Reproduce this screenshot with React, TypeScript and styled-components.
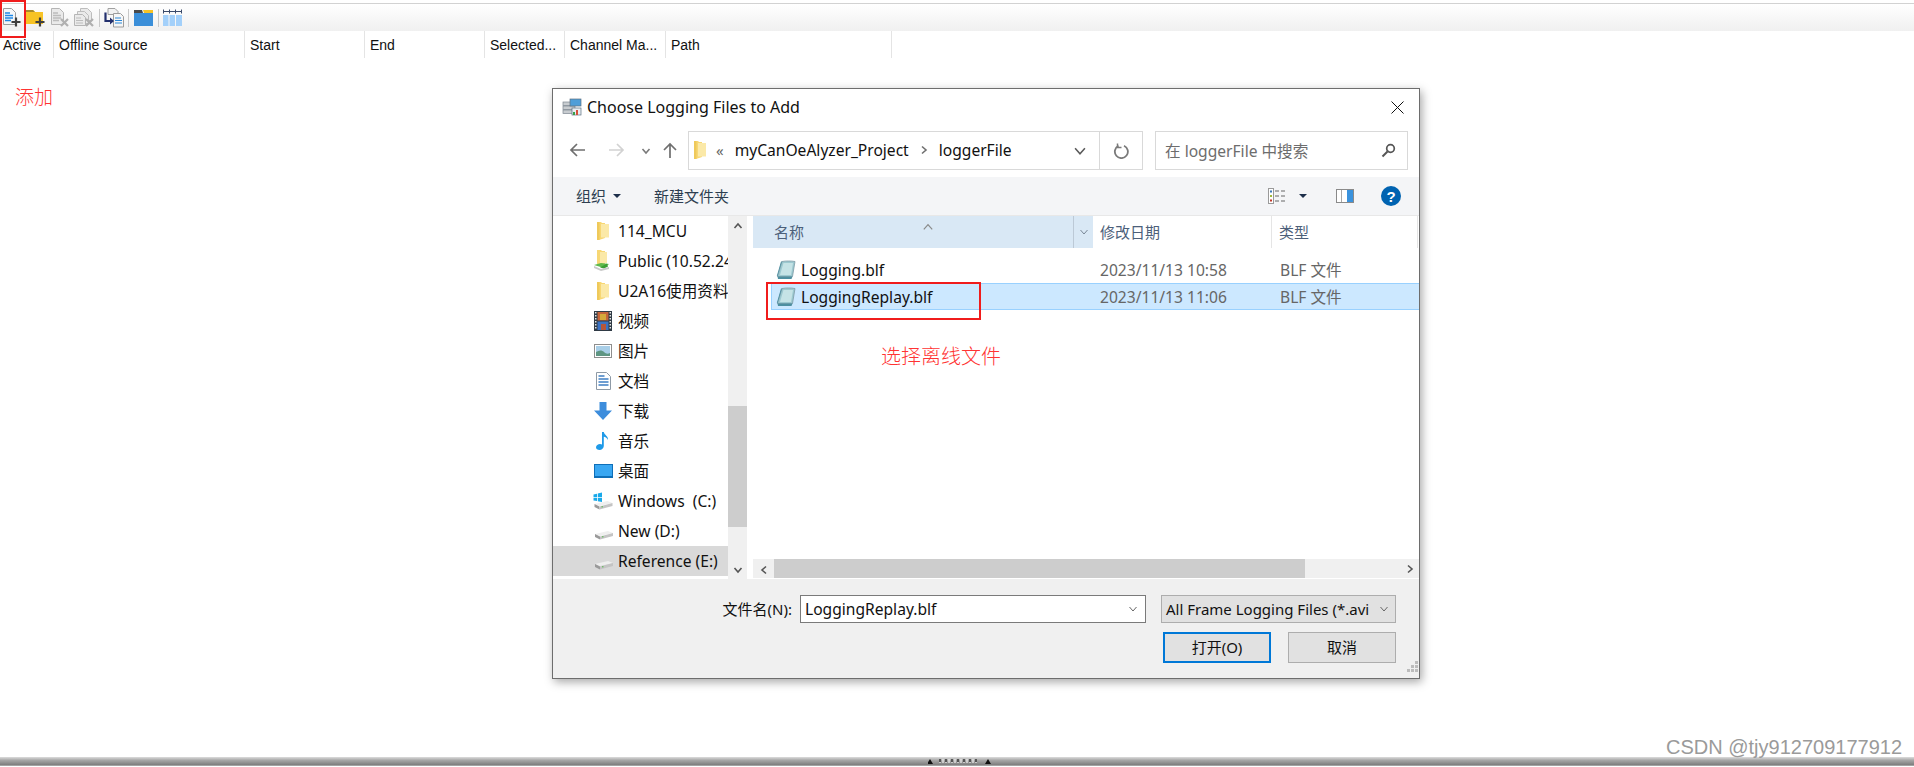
import React from 'react';
import styled, { createGlobalStyle } from 'styled-components';

const UI_FONT = `"Noto Sans", "Noto Sans CJK SC", sans-serif`;

const GlobalStyle = createGlobalStyle`
  html, body {
    margin: 0;
    padding: 0;
    background: #fff;
    overflow: hidden;
  }
  * {
    box-sizing: border-box;
  }
`;

const Page = styled.div`
  position: relative;
  display: flex;
  flex-direction: column;
  width: 1914px;
  height: 767px;
  overflow: hidden;
  background: #fff;
  font-family: ${UI_FONT};
`;

const TopToolbar = styled.div`
  display: flex;
  align-items: center;
  height: 28px;
  margin-top: 3px;
  flex-shrink: 0;
  border-top: 1px solid #d2d2d2;
  background: linear-gradient(#ffffff, #f0f0f0);
`;

const ToolButton = styled.div`
  display: flex;
  align-items: center;
  justify-content: center;
  width: 24px;
  height: 20px;
  flex-shrink: 0;
`;

const ToolSeparator = styled.div`
  width: 1px;
  height: 18px;
  margin: 0 2px 0 2.5px;
  background: #c8c8c8;
  flex-shrink: 0;
`;

const ColumnRow = styled.div`
  display: flex;
  height: 27px;
  flex-shrink: 0;
  background: #fff;
`;

const ColumnHead = styled.div<{ $width: number }>`
  width: ${p => p.$width}px;
  padding: 1px 0 0 ${p => (p.$width === 54 ? 3 : 5)}px;
  border-right: 1px solid #e4e4e4;
  font-family: "Liberation Sans", sans-serif;
  font-size: 14px;
  line-height: 26px;
  color: #111;
  white-space: nowrap;
  overflow: hidden;
`;

const Workspace = styled.div`
  flex: 1;
`;

const BottomBar = styled.div`
  display: flex;
  align-items: center;
  height: 9px;
  margin-bottom: 1px;
  padding-left: 928px;
  flex-shrink: 0;
  background: linear-gradient(#dcdcdc, #a8a8a8 35%, #808080 85%, #b8b8b8);
`;

const AddNote = styled.div`
  position: absolute;
  left: 15px;
  top: 82px;
  font-family: "Noto Sans CJK SC", sans-serif;
  font-size: 19px;
  font-weight: 300;
  line-height: 28px;
  color: #f33;
`;

const FileNote = styled.div`
  position: absolute;
  left: 881px;
  top: 342px;
  font-family: "Noto Sans CJK SC", sans-serif;
  font-size: 20px;
  font-weight: 300;
  line-height: 28px;
  color: #f33;
`;

const ToolMark = styled.div`
  position: absolute;
  left: 0;
  top: 0;
  width: 26px;
  height: 38px;
  border: 2px solid #f01c1c;
`;

const RowMark = styled.div`
  position: absolute;
  left: 766px;
  top: 282px;
  width: 215px;
  height: 38px;
  border: 2px solid #f01c1c;
`;

const Watermark = styled.div`
  position: absolute;
  left: 1666px;
  top: 735px;
  font-family: "Liberation Sans", sans-serif;
  font-size: 20px;
  line-height: 24px;
  color: #9a9a9a;
  white-space: nowrap;
`;

const Dialog = styled.div`
  position: absolute;
  left: 552px;
  top: 88px;
  display: flex;
  flex-direction: column;
  width: 868px;
  height: 591px;
  border: 1px solid #6d6d6d;
  background: #fff;
  box-shadow: 2px 3px 9px rgba(0, 0, 0, 0.35);
  font-size: 15.6px;
  color: #111;
`;

const TitleBar = styled.div`
  display: flex;
  align-items: center;
  height: 37px;
  padding: 0 15px 1px 9px;
  flex-shrink: 0;
`;

const TitleText = styled.div`
  flex: 1;
  margin-left: 5px;
  font-size: 16px;
`;

const NavRow = styled.div`
  display: flex;
  align-items: flex-start;
  height: 51px;
  padding: 5px 12px 0 16px;
  flex-shrink: 0;
`;

const NavButton = styled.div<{ $width: number }>`
  display: flex;
  align-items: center;
  justify-content: center;
  width: ${p => p.$width}px;
  height: 39px;
  flex-shrink: 0;
`;

const AddressBox = styled.div`
  display: flex;
  align-items: center;
  width: 455px;
  height: 39px;
  margin-left: 9px;
  border: 1px solid #d9d9d9;
  flex-shrink: 0;
`;

const Crumbs = styled.div`
  display: flex;
  align-items: center;
  flex: 1;
  padding: 0 0 1px 5px;
  gap: 10px;
  white-space: nowrap;
`;

const CrumbMark = styled.span`
  color: #666;
  font-size: 15px;
  margin-right: 1px;
`;

const AddressTail = styled.div`
  display: flex;
  align-items: center;
  justify-content: center;
  width: 39px;
  height: 100%;
`;

const RefreshCell = styled.div`
  display: flex;
  align-items: center;
  justify-content: center;
  width: 43px;
  height: 100%;
  border-left: 1px solid #d9d9d9;
`;

const SearchBox = styled.div`
  display: flex;
  align-items: center;
  justify-content: space-between;
  width: 253px;
  height: 39px;
  margin-left: 12px;
  padding: 0 11px 1px 9px;
  border: 1px solid #d9d9d9;
  color: #6d6d6d;
  flex-shrink: 0;
`;

const ActionBar = styled.div`
  display: flex;
  align-items: center;
  height: 39px;
  padding: 0 18px 0 23px;
  background: #f4f5f7;
  border-bottom: 1px solid #e8e8e8;
  flex-shrink: 0;
`;

const ActionLabel = styled.div`
  padding-bottom: 2px;
  color: #2d3e50;
  font-size: 15px;
`;

const DownCaret = styled.div<{ $gap: number }>`
  width: 0;
  height: 0;
  margin-left: ${p => p.$gap}px;
  border-left: 4px solid transparent;
  border-right: 4px solid transparent;
  border-top: 4px solid #1d2f4a;
`;

const ActionSpacer = styled.div<{ $width?: number }>`
  flex: ${p => (p.$width ? 'none' : 1)};
  width: ${p => p.$width || 0}px;
`;

const HelpBadge = styled.div`
  display: flex;
  align-items: center;
  justify-content: center;
  width: 20px;
  height: 20px;
  border-radius: 50%;
  background: #0063b1;
  color: #fff;
  font-family: "Liberation Sans", sans-serif;
  font-size: 15px;
  font-weight: 700;
`;

const Body = styled.div`
  display: flex;
  height: 363px;
  flex-shrink: 0;
`;

const Sidebar = styled.div`
  width: 175px;
  flex-shrink: 0;
`;

const SideRow = styled.div<{ $active?: boolean }>`
  display: flex;
  align-items: center;
  height: 30px;
  padding-left: 40px;
  gap: 5px;
  background: ${p => (p.$active ? '#d9d9d9' : 'transparent')};
  white-space: pre;
  overflow: hidden;
`;

const SideIcon = styled.div`
  display: flex;
  align-items: center;
  justify-content: center;
  width: 20px;
  height: 20px;
  flex-shrink: 0;
`;

const SideLabel = styled.span`
  padding-bottom: 1px;
`;

const VScroll = styled.div`
  display: flex;
  flex-direction: column;
  width: 19px;
  background: #f0f0f0;
  flex-shrink: 0;
`;

const ScrollButton = styled.div<{ $size: number }>`
  display: flex;
  align-items: center;
  justify-content: center;
  width: ${p => p.$size}px;
  height: ${p => p.$size}px;
  flex-shrink: 0;
`;

const VSpace = styled.div<{ $height: number }>`
  height: ${p => p.$height}px;
`;

const VThumb = styled.div`
  height: 121px;
  background: #cdcdcd;
`;

const Listing = styled.div`
  display: flex;
  flex-direction: column;
  flex: 1;
  min-width: 0;
  margin-left: 6px;
`;

const ListHead = styled.div`
  display: flex;
  height: 32px;
  flex-shrink: 0;
  color: #4c607a;
  font-size: 15px;
`;

const NameHead = styled.div`
  position: relative;
  display: flex;
  align-items: center;
  width: 320px;
  padding: 0 0 2px 21px;
  background: #d9e8f5;
`;

const SortMark = styled.div`
  position: absolute;
  left: 169px;
  top: 1px;
`;

const NameDrop = styled.div`
  display: flex;
  align-items: center;
  justify-content: center;
  width: 20px;
  background: #d9e8f5;
  border-left: 1px solid #bcc9d6;
`;

const PlainHead = styled.div<{ $width: number }>`
  display: flex;
  align-items: center;
  width: ${p => p.$width}px;
  padding: 0 0 2px 7px;
  border-right: 1px solid #e5e5e5;
`;

const Rows = styled.div`
  flex: 1;
  padding: 8px 0 0 18px;
`;

const FileRow = styled.div<{ $selected?: boolean }>`
  display: flex;
  align-items: center;
  height: 27px;
  padding-left: 4px;
  border: 1px solid ${p => (p.$selected ? '#99d1ff' : 'transparent')};
  border-right: none;
  background: ${p => (p.$selected ? '#cce8ff' : 'transparent')};
`;

const FileName = styled.div`
  width: 299px;
  margin-left: 5px;
  white-space: nowrap;
`;

const FileMeta = styled.div<{ $width: number }>`
  width: ${p => p.$width}px;
  color: #666;
  white-space: nowrap;
`;

const HScroll = styled.div`
  display: flex;
  height: 19px;
  margin-bottom: 1px;
  background: #f0f0f0;
  flex-shrink: 0;
`;

const HThumb = styled.div`
  width: 531px;
  background: #cdcdcd;
`;

const Spring = styled.div`
  flex: 1;
`;

const Footer = styled.div`
  flex: 1;
  position: relative;
  padding: 16px 23px 0 0;
  background: #f0f0f0;
`;

const FooterRow = styled.div`
  display: flex;
  align-items: center;
  justify-content: flex-end;
`;

const FileLabel = styled.div`
  margin-right: 8px;
  padding-bottom: 1px;
  font-size: 15px;
`;

const NameInput = styled.div`
  display: flex;
  align-items: center;
  justify-content: space-between;
  width: 346px;
  height: 28px;
  padding: 0 7px 1px 4px;
  border: 1px solid #7a7a7a;
  background: #fff;
`;

const TypeSelect = styled.div`
  display: flex;
  align-items: center;
  justify-content: space-between;
  width: 235px;
  height: 28px;
  margin-left: 15px;
  padding: 0 6px 1px 4px;
  border: 1px solid #adadad;
  background: #e1e1e1;
  white-space: nowrap;
  overflow: hidden;
`;

const TypeText = styled.div`
  font-size: 15px;
`;

const ButtonRow = styled(FooterRow)`
  margin-top: 9px;
  gap: 17px;
`;

const DialogButton = styled.div<{ $primary?: boolean }>`
  display: flex;
  align-items: center;
  justify-content: center;
  width: 108px;
  height: 31px;
  padding-bottom: 2px;
  background: #e1e1e1;
  border: ${p => (p.$primary ? '2px solid #0078d7' : '1px solid #adadad')};
  font-size: 15px;
`;

const Grip = styled.div`
  position: absolute;
  right: 1px;
  bottom: 1px;
`;

const Chevron = ({ dir, size = 10, color = '#606060', weight = 1.6 }: { dir: 'up' | 'down' | 'left' | 'right'; size?: number; color?: string; weight?: number }) => {
  const points = {
    up: '1.5,7 5,3 8.5,7',
    down: '1.5,3 5,7 8.5,3',
    left: '7,1.5 3,5 7,8.5',
    right: '3,1.5 7,5 3,8.5',
  }[dir];
  return (
    <svg width={size} height={size} viewBox="0 0 10 10">
      <polyline points={points} fill="none" stroke={color} strokeWidth={weight} />
    </svg>
  );
};

const ArrowIcon = ({ dir, color }: { dir: 'left' | 'right' | 'up'; color: string }) => {
  const path = {
    left: 'M16 8H2M8 2L2 8l6 6',
    right: 'M1 8h14M9 2l6 6-6 6',
    up: 'M8 16V2M2 8l6-6 6 6',
  }[dir];
  return (
    <svg width="17" height="17" viewBox="0 0 17 17">
      <path d={path} fill="none" stroke={color} strokeWidth="1.7" />
    </svg>
  );
};

const NarrowFolder = () => (
  <svg width="12" height="20" viewBox="0 0 12 20">
    <path d="M0 1h4l1 1h3v15l-6 2H0z" fill="#f7d774" />
    <path d="M4 3h8v13.5H4z" fill="#fbe9a8" />
    <path d="M0 1h2.5v18H0z" fill="#efc95a" />
  </svg>
);

const NetFolder = () => (
  <svg width="20" height="22" viewBox="0 0 20 22">
    <path d="M4 0h4l1 1h3v13H4z" fill="#f7d774" />
    <path d="M7 2h7v11H7z" fill="#fbe9a8" />
    <path d="M1 15l7-2 8 1-5 4z" fill="#5fb94d" />
    <path d="M14 13.5l1 3-4 2-4-1z" fill="#3c9e35" />
    <path d="M1 16l7 3 8-2v2l-8 2-7-3z" fill="#c9c9c9" />
  </svg>
);

const FilmIcon = () => (
  <svg width="18" height="20" viewBox="0 0 18 20">
    <rect width="18" height="20" fill="#2f3a45" />
    <rect x="3.5" y="1" width="11" height="8.5" fill="#c5653a" />
    <rect x="6" y="3" width="6" height="6" fill="#d6a93a" />
    <rect x="3.5" y="10.5" width="11" height="8.5" fill="#3a72c4" />
    <rect x="7" y="13" width="5" height="6" fill="#b7563a" />
    {[1, 4, 7, 10, 13, 16].map(y => (
      <g key={y}>
        <rect x="1" y={y} width="1.5" height="1.5" fill="#e6e6e6" />
        <rect x="15.5" y={y} width="1.5" height="1.5" fill="#e6e6e6" />
      </g>
    ))}
  </svg>
);

const PictureIcon = () => (
  <svg width="18" height="14" viewBox="0 0 18 14">
    <rect x="0.5" y="0.5" width="17" height="13" fill="#fff" stroke="#8e8e8e" />
    <rect x="2" y="2" width="14" height="10" fill="#a9cfe8" />
    <path d="M2 8c3-2 6-2 8 0s4 2 6 1v3H2z" fill="#5f9683" />
  </svg>
);

const DocsIcon = () => (
  <svg width="15" height="18" viewBox="0 0 15 18">
    <path d="M.5.5h10l4 4v13H.5z" fill="#fff" stroke="#8e9aa6" />
    <path d="M2.5 4h6M2.5 7h10M2.5 10h10M2.5 13h10" stroke="#3f7fc4" strokeWidth="1.3" />
  </svg>
);

const DownloadIcon = () => (
  <svg width="18" height="18" viewBox="0 0 18 18">
    <path d="M5.5 0h7v8.5H18L9 18 0 8.5h5.5z" fill="#3d8ddc" />
  </svg>
);

const MusicIcon = () => (
  <svg width="14" height="18" viewBox="0 0 14 18">
    <path d="M6 0h1.8c.4 3 4.800 4 4.200 8-.8-2-2.600-3-4.200-3.200V14c0 2.300-2 4-4.300 4C1.500 18 0 17 0 15.200 0 13.300 2 12 4 12c.8 0 1.500.2 2 .5z" fill="#1f9ae8" />
  </svg>
);

const DesktopIcon = () => (
  <svg width="19" height="14" viewBox="0 0 19 14">
    <rect width="19" height="14" fill="#0f6fb8" />
    <rect x="1" y="1" width="17" height="11" fill="#39a7f2" />
  </svg>
);

const DriveBody = () => (
  <g>
    <path d="M1 13l13-3 5 2-13 3z" fill="#efefef" />
    <path d="M1 13l5 2.500v3L1 16z" fill="#9a9a9a" />
    <path d="M6 15.500l13-3.500v3L6 18.500z" fill="#c4c4c4" />
    <rect x="8" y="15.300" width="1.500" height="1" fill="#53b848" />
  </g>
);

const DriveIcon = () => (
  <svg width="19" height="20" viewBox="0 0 19 20">
    <DriveBody />
  </svg>
);

const SystemDriveIcon = () => (
  <svg width="20" height="20" viewBox="0 0 19 20">
    <path d="M0 3.500l3.500-.8V6H0zM4.300 2.500L8.500 1.500V6H4.300zM0 6.800h3.500v3.300L0 9.500zM4.300 6.800h4.200v4.200l-4.200-.8z" fill="#19a9ea" />
    <DriveBody />
  </svg>
);

const LogFileIcon = () => (
  <svg width="20" height="20" viewBox="0 0 20 20">
    <path d="M6 1.500C10 .8 15 .8 19 1.500L16.500 16.500H1.500z" fill="#9cc9d0" stroke="#7d9aa6" strokeWidth="0.8" />
    <path d="M7.500 3h9.500L15 15H4z" fill="#c5e3e6" />
    <path d="M1.500 16.500h15L15.500 19H2z" fill="#4d8fa0" />
    <path d="M1.500 16.500L6 1.500 5 1.500 .8 16z" fill="#4d8fa0" />
  </svg>
);

const AppIcon = () => (
  <svg width="20" height="18" viewBox="0 0 20 18">
    <rect x="1" y="4" width="12" height="3.500" fill="#c8ccd0" stroke="#7d8790" strokeWidth="0.7" />
    <rect x="1" y="8" width="12" height="3.500" fill="#c8ccd0" stroke="#7d8790" strokeWidth="0.7" />
    <rect x="1" y="12" width="12" height="3.500" fill="#c8ccd0" stroke="#7d8790" strokeWidth="0.7" />
    <rect x="8" y="1" width="11" height="7" fill="#4f9ed8" stroke="#5d6f80" strokeWidth="0.7" />
    <rect x="10" y="10" width="9" height="7" fill="#e8eef2" stroke="#5d6f80" strokeWidth="0.7" />
    <rect x="11" y="14" width="2" height="3" fill="#3aa14a" />
    <rect x="14" y="12" width="2" height="5" fill="#d8503c" />
  </svg>
);

const CloseIcon = () => (
  <svg width="13" height="13" viewBox="0 0 13 13">
    <path d="M.5.5l12 12M12.500.5l-12 12" stroke="#111" strokeWidth="1" />
  </svg>
);

const RefreshIcon = () => (
  <svg width="16" height="16" viewBox="0 0 16 16">
    <path d="M5.500 2.800A6.500 6.500 0 1 0 11 2.700" fill="none" stroke="#7a7a7a" strokeWidth="1.800" />
    <path d="M4.500.5v4h4" fill="none" stroke="#7a7a7a" strokeWidth="1.500" />
  </svg>
);

const SearchIcon = () => (
  <svg width="15" height="15" viewBox="0 0 15 15">
    <circle cx="9.500" cy="5.500" r="3.800" fill="none" stroke="#555" strokeWidth="1.700" />
    <path d="M6.500 8.500L1.500 13.500" stroke="#555" strokeWidth="2" />
  </svg>
);

const ViewsIcon = () => (
  <svg width="18" height="16" viewBox="0 0 18 16">
    <rect x="0.500" y="0.500" width="5" height="15" fill="#fff" stroke="#9a9a9a" />
    <rect x="2" y="2.500" width="2" height="2" fill="#3a78b8" />
    <rect x="2" y="7" width="2" height="2" fill="#9fb83a" />
    <rect x="2" y="11.500" width="2" height="2" fill="#c0392b" />
    <path d="M7 3h4M13 3h4M7 8h4M13 8h4M7 13h4M13 13h4" stroke="#666" />
  </svg>
);

const PaneIcon = () => (
  <svg width="18" height="14" viewBox="0 0 18 14">
    <rect x="0.500" y="0.500" width="17" height="13" fill="#fff" stroke="#8a8a8a" />
    <rect x="5" y="1" width="1" height="12" fill="#a8a8a8" />
    <rect x="11" y="1" width="6" height="12" fill="#3a92dd" />
  </svg>
);

const DocAddIcon = () => (
  <svg width="20" height="20" viewBox="0 0 20 20">
    <path d="M1.500.5h8l4 4v12h-12z" fill="#f4f6f8" stroke="#9c9c9c" />
    <path d="M3 5h5M3 7.500h8M3 10h8M3 12.500h6" stroke="#1e88e5" strokeWidth="1.300" />
    <path d="M14 9.500v9M9.500 14h9" stroke="#3f3f3f" strokeWidth="2.200" />
  </svg>
);

const FolderAddIcon = () => (
  <svg width="20" height="20" viewBox="0 0 20 20">
    <path d="M0 2h7l2 2h8v12H0z" fill="#f7c325" />
    <path d="M0 2h7l2 2H0z" fill="#a88a2a" />
    <path d="M14 9.500v9M9.500 14h9" stroke="#3f3f3f" strokeWidth="2.200" />
  </svg>
);

const DocRemoveIcon = () => (
  <svg width="20" height="20" viewBox="0 0 20 20">
    <path d="M1.500.5h8l4 4v12h-12z" fill="#eaeaea" stroke="#b5b5b5" />
    <path d="M3 5h5M3 7.500h8M3 10h8M3 12.500h6" stroke="#bcbcbc" strokeWidth="1.300" />
    <path d="M11 11l7 7M18 11l-7 7" stroke="#b0b0b0" strokeWidth="2.200" />
  </svg>
);

const StackRemoveIcon = () => (
  <svg width="20" height="20" viewBox="0 0 20 20">
    <path d="M6.500.5h7l4 4v8h-11z" fill="#eaeaea" stroke="#bdbdbd" />
    <path d="M3.500 3.500h7l4 4v8h-11z" fill="#eaeaea" stroke="#bdbdbd" />
    <path d="M.5 6.500h8l3 3v8h-11z" fill="#eaeaea" stroke="#b5b5b5" />
    <path d="M2 10h5M2 12.500h7M2 15h7" stroke="#bcbcbc" strokeWidth="1.200" />
    <path d="M12 11l7 7M19 11l-7 7" stroke="#b0b0b0" strokeWidth="2.200" />
  </svg>
);

const DocMoveIcon = () => (
  <svg width="20" height="20" viewBox="0 0 20 20">
    <path d="M4 .5h7l3 3v3H4z" fill="#f2f2f2" stroke="#a0a0a0" />
    <path d="M9.500 5.500h7l3 3v10.500h-10z" fill="#f6f6f6" stroke="#9c9c9c" />
    <path d="M11 10h6M11 12.500h7M11 15h7" stroke="#2b88d8" strokeWidth="1.200" />
    <path d="M1.500 4.500v8.500H8" fill="none" stroke="#23306e" strokeWidth="2.200" />
    <path d="M6 9.500l4 3.500-4 3.500z" fill="#23306e" />
  </svg>
);

const BlueFolderIcon = () => (
  <svg width="19" height="17" viewBox="0 0 19 17">
    <path d="M0 1h8l1 3H0z" fill="#4a4a4a" />
    <path d="M9 1h10v3H10z" fill="#f7c325" />
    <rect y="4" width="19" height="13" fill="#3b8fd9" />
  </svg>
);

const ColumnsIcon = () => (
  <svg width="19" height="17" viewBox="0 0 19 17">
    <path d="M0 2.500h19" stroke="#3a4a6a" />
    <path d="M.5 .5v4M6.500 .5v4M12.500 .5v4M18.500 .5v4" stroke="#3a4a6a" />
    <rect y="6" width="5.500" height="11" fill="#a3d0fa" />
    <rect x="6.500" y="6" width="5.500" height="11" fill="#a3d0fa" />
    <rect x="13" y="6" width="6" height="11" fill="#a3d0fa" />
  </svg>
);

const SplitterHandle = () => (
  <svg width="64" height="8" viewBox="0 0 64 8">
    <path d="M2 1L-1 6h6zM60 1l-3 5h6z" fill="#111" />
    <path d="M12 1v4M15 1v4M18 1v4M21 1v4M24 1v4M27 1v4M30 1v4M33 1v4M36 1v4M39 1v4M42 1v4M45 1v4M48 1v4" stroke="#fff" strokeWidth="1" />
    <path d="M12 1v3M18 1v3M24 1v3M30 1v3M36 1v3M42 1v3M48 1v3" stroke="#111" strokeWidth="1.300" />
  </svg>
);

const GripIcon = () => (
  <svg width="11" height="11" viewBox="0 0 11 11">
    <path d="M8 0h3v3H8zM4 4h3v3H4zM8 4h3v3H8zM0 8h3v3H0zM4 8h3v3H4zM8 8h3v3H8z" fill="#bcbcbc" />
  </svg>
);

const columns = [
  { title: 'Active', width: 54 },
  { title: 'Offline Source', width: 191 },
  { title: 'Start', width: 120 },
  { title: 'End', width: 120 },
  { title: 'Selected...', width: 80 },
  { title: 'Channel Ma...', width: 101 },
  { title: 'Path', width: 226 },
];

const sideItems = [
  { label: '114_MCU', icon: <NarrowFolder /> },
  { label: 'Public (10.52.24', icon: <NetFolder /> },
  { label: 'U2A16使用资料', icon: <NarrowFolder /> },
  { label: '视频', icon: <FilmIcon /> },
  { label: '图片', icon: <PictureIcon /> },
  { label: '文档', icon: <DocsIcon /> },
  { label: '下载', icon: <DownloadIcon /> },
  { label: '音乐', icon: <MusicIcon /> },
  { label: '桌面', icon: <DesktopIcon /> },
  { label: 'Windows  (C:)', icon: <SystemDriveIcon /> },
  { label: 'New (D:)', icon: <DriveIcon /> },
  { label: 'Reference (E:)', icon: <DriveIcon />, active: true },
];

const files = [
  { name: 'Logging.blf', date: '2023/11/13 10:58', type: 'BLF 文件' },
  { name: 'LoggingReplay.blf', date: '2023/11/13 11:06', type: 'BLF 文件', selected: true },
];

export default function App() {
  return (
    <Page>
      <GlobalStyle />
      <TopToolbar>
        <ToolButton><DocAddIcon /></ToolButton>
        <ToolButton><FolderAddIcon /></ToolButton>
        <ToolButton><DocRemoveIcon /></ToolButton>
        <ToolButton><StackRemoveIcon /></ToolButton>
        <ToolSeparator />
        <ToolButton><DocMoveIcon /></ToolButton>
        <ToolSeparator />
        <ToolButton><BlueFolderIcon /></ToolButton>
        <ToolSeparator />
        <ToolButton><ColumnsIcon /></ToolButton>
      </TopToolbar>
      <ColumnRow>
        {columns.map(c => (
          <ColumnHead key={c.title} $width={c.width}>{c.title}</ColumnHead>
        ))}
      </ColumnRow>
      <Workspace />
      <BottomBar><SplitterHandle /></BottomBar>

      <ToolMark />
      <AddNote>添加</AddNote>

      <Dialog>
        <TitleBar>
          <AppIcon />
          <TitleText>Choose Logging Files to Add</TitleText>
          <CloseIcon />
        </TitleBar>
        <NavRow>
          <NavButton $width={17}><ArrowIcon dir="left" color="#6f6f6f" /></NavButton>
          <NavButton $width={22} />
          <NavButton $width={17}><ArrowIcon dir="right" color="#d2d2d2" /></NavButton>
          <NavButton $width={12} />
          <NavButton $width={18}><Chevron dir="down" color="#7a7a7a" /></NavButton>
          <NavButton $width={7} />
          <NavButton $width={17}><ArrowIcon dir="up" color="#6f6f6f" /></NavButton>
          <AddressBox>
            <Crumbs>
              <NarrowFolder />
              <CrumbMark>«</CrumbMark>
              <span>myCanOeAlyzer_Project</span>
              <Chevron dir="right" color="#6f6f6f" />
              <span>loggerFile</span>
            </Crumbs>
            <AddressTail><Chevron dir="down" size={14} color="#5a5a5a" weight={1.1} /></AddressTail>
            <RefreshCell><RefreshIcon /></RefreshCell>
          </AddressBox>
          <SearchBox>
            <span>在 loggerFile 中搜索</span>
            <SearchIcon />
          </SearchBox>
        </NavRow>
        <ActionBar>
          <ActionLabel>组织</ActionLabel>
          <DownCaret $gap={7} />
          <ActionSpacer $width={33} />
          <ActionLabel>新建文件夹</ActionLabel>
          <ActionSpacer />
          <ViewsIcon />
          <DownCaret $gap={13} />
          <ActionSpacer $width={29} />
          <PaneIcon />
          <ActionSpacer $width={27} />
          <HelpBadge>?</HelpBadge>
        </ActionBar>
        <Body>
          <Sidebar>
            {sideItems.map(item => (
              <SideRow key={item.label} $active={item.active}>
                <SideIcon>{item.icon}</SideIcon>
                <SideLabel>{item.label}</SideLabel>
              </SideRow>
            ))}
          </Sidebar>
          <VScroll>
            <ScrollButton $size={19}><Chevron dir="up" color="#555" /></ScrollButton>
            <VSpace $height={171} />
            <VThumb />
            <VSpace $height={33} />
            <ScrollButton $size={19}><Chevron dir="down" color="#555" /></ScrollButton>
          </VScroll>
          <Listing>
            <ListHead>
              <NameHead>
                名称
                <SortMark><Chevron dir="up" size={12} color="#8a8a8a" weight={1} /></SortMark>
              </NameHead>
              <NameDrop><Chevron dir="down" color="#7a8796" weight={1} /></NameDrop>
              <PlainHead $width={179}>修改日期</PlainHead>
              <PlainHead $width={146}>类型</PlainHead>
            </ListHead>
            <Rows>
              {files.map(f => (
                <FileRow key={f.name} $selected={f.selected}>
                  <LogFileIcon />
                  <FileName>{f.name}</FileName>
                  <FileMeta $width={180}>{f.date}</FileMeta>
                  <FileMeta $width={100}>{f.type}</FileMeta>
                </FileRow>
              ))}
            </Rows>
            <HScroll>
              <ScrollButton $size={21}><Chevron dir="left" color="#555" /></ScrollButton>
              <HThumb />
              <Spring />
              <ScrollButton $size={19}><Chevron dir="right" color="#555" /></ScrollButton>
            </HScroll>
          </Listing>
        </Body>
        <Footer>
          <FooterRow>
            <FileLabel>文件名(N):</FileLabel>
            <NameInput>
              <span>LoggingReplay.blf</span>
              <Chevron dir="down" color="#666" weight={1} />
            </NameInput>
            <TypeSelect>
              <TypeText>All Frame Logging Files (*.avi</TypeText>
              <Chevron dir="down" color="#666" weight={1} />
            </TypeSelect>
          </FooterRow>
          <ButtonRow>
            <DialogButton $primary>打开(O)</DialogButton>
            <DialogButton>取消</DialogButton>
          </ButtonRow>
          <Grip><GripIcon /></Grip>
        </Footer>
      </Dialog>

      <RowMark />
      <FileNote>选择离线文件</FileNote>
      <Watermark>CSDN @tjy912709177912</Watermark>
    </Page>
  );
}
